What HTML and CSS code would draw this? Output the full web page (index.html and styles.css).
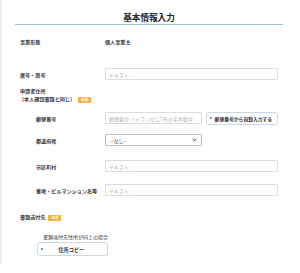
FILE: index.html
```html
<!DOCTYPE html>
<html lang="ja">
<head>
<meta charset="utf-8">
<link rel="stylesheet" href="styles.css">
</head>
<body>
<div class="page">
  <div class="panel">
    <h1 class="title">基本情報入力</h1>
    <div class="row row-first">
      <div class="label">事業形態</div>
      <div class="value">個人事業主</div>
    </div>
    <div class="row row-second">
      <div class="label">屋号・商号</div>
      <input class="input" type="text" placeholder="テキスト">
    </div>
    <div class="sec-title">申請者住所<br><span class="paren">（本人確認書類と同じ）</span><span class="badge">必須</span></div>
    <div class="sub">
      <div class="row">
        <div class="label sub-label">郵便番号</div>
        <div class="postal">
          <input class="input input-postal" type="text" placeholder="郵便番号 ハイフンなし7桁の半角数字">
          <button class="btn btn-postal" type="button"><span class="dot"></span>郵便番号から自動入力する</button>
        </div>
      </div>
      <div class="row row-select">
        <div class="label sub-label">都道府県</div>
        <div class="select">
          <span>--なし--</span>
          <svg class="chev" width="5" height="4" viewBox="0 0 5 4"><path d="M0.6 0.8 L2.5 2.8 L4.4 0.8" fill="none" stroke="#444" stroke-width="1"/></svg>
        </div>
      </div>
      <div class="row">
        <div class="label sub-label">市区町村</div>
        <input class="input" type="text" placeholder="テキスト">
      </div>
      <div class="row">
        <div class="label sub-label">番地・ビルマンション名等</div>
        <input class="input" type="text" placeholder="テキスト">
      </div>
    </div>
    <div class="sec-title sec-two">書類送付先<span class="badge">必須</span></div>
    <div class="copy">
      <div class="note">書類送付先住所が同上の場合</div>
      <button class="btn btn-copy" type="button"><span class="dot"></span><span class="copy-text">住所コピー</span></button>
    </div>
  </div>
</div>
</body>
</html>
```
FILE: styles.css
```css
html, body {
  margin: 0;
  padding: 0;
  background: #ffffff;
}
body {
  font-family: "Noto Sans CJK JP", "Noto Sans", sans-serif;
  color: #333333;
}
.page {
  border-left: 2px solid #e2eef8;
  height: 264px;
  box-sizing: border-box;
}
.panel {
  margin-left: 13px;
  width: 268px;
  box-sizing: border-box;
  padding: 0 5px;
}
.title {
  margin: 0 -5px;
  padding: 11px 0 1px;
  font-size: 8.6px;
  line-height: 12px;
  font-weight: 700;
  text-align: center;
  color: #222222;
  border-bottom: 1px solid #a7c0d8;
}
.row {
  display: flex;
  align-items: center;
  height: 12px;
}
.row-first {
  margin-top: 10px;
}
.row-second {
  margin-top: 21px;
}
.row-select {
  margin-top: -2px;
  margin-bottom: 2px;
}
.label {
  width: 85px;
  flex: none;
  font-size: 5.1px;
  font-weight: 700;
  color: #3a3a3a;
  white-space: nowrap;
}
.sub-label {
  width: 69px;
}
.value {
  font-size: 5.1px;
  font-weight: 700;
  color: #3a3a3a;
}
.input {
  flex: 1;
  min-width: 0;
  height: 12px;
  box-sizing: border-box;
  margin: 0;
  padding: 0 3px;
  border: 1px solid #dcdcdc;
  border-radius: 1px;
  font-family: inherit;
  font-size: 5px;
  color: #333333;
  background: #ffffff;
  outline: none;
}
.input::placeholder {
  color: #b4b4b4;
}
.sec-title {
  margin-top: 7px;
  font-size: 5.1px;
  line-height: 8px;
  font-weight: 700;
  color: #3a3a3a;
}
.paren {
  margin-left: -1px;
}
.badge {
  display: inline-block;
  width: 13px;
  height: 6px;
  margin-left: 3px;
  background: #f6b042;
  border-radius: 1px;
  color: #ffffff;
  font-size: 3.5px;
  line-height: 6px;
  text-align: center;
  vertical-align: 0px;
}
.sub {
  margin-top: 9px;
  padding-left: 16px;
  display: flex;
  flex-direction: column;
  gap: 12px;
}
.postal {
  flex: 1;
  display: flex;
  gap: 4px;
  align-items: center;
}
.input-postal {
  flex: none;
  width: 97px;
}
.btn {
  margin: 0;
  background: #ffffff;
  border: 1px solid #c9d7e5;
  border-radius: 3px;
  font-family: inherit;
  font-weight: 700;
  color: #333333;
  display: flex;
  align-items: center;
  box-sizing: border-box;
  cursor: pointer;
}
.btn-postal {
  flex: 1;
  height: 13px;
  padding: 0 3px;
  font-size: 4.8px;
  gap: 3px;
  white-space: nowrap;
}
.dot {
  width: 1.6px;
  height: 1.6px;
  border-radius: 50%;
  background: #3f86c7;
  flex: none;
}
.select {
  width: 97px;
  height: 12px;
  box-sizing: border-box;
  border: 1px solid #b9b9b9;
  border-radius: 1px;
  display: flex;
  align-items: center;
  justify-content: space-between;
  padding: 0 4px 0 4px;
  font-size: 5px;
  color: #333333;
}
.chev {
  display: block;
}
.sec-two {
  margin-top: 17px;
}
.copy {
  margin-top: 12px;
  margin-left: 17px;
  width: 71px;
}
.note {
  font-size: 5px;
  line-height: 8px;
  color: #333333;
  padding-left: 6px;
  white-space: nowrap;
}
.btn-copy {
  margin-top: 1px;
  width: 71px;
  height: 14px;
  padding: 0 3px;
  font-size: 5.2px;
}
.copy-text {
  flex: 1;
  text-align: center;
  margin-right: 4px;
}
```
